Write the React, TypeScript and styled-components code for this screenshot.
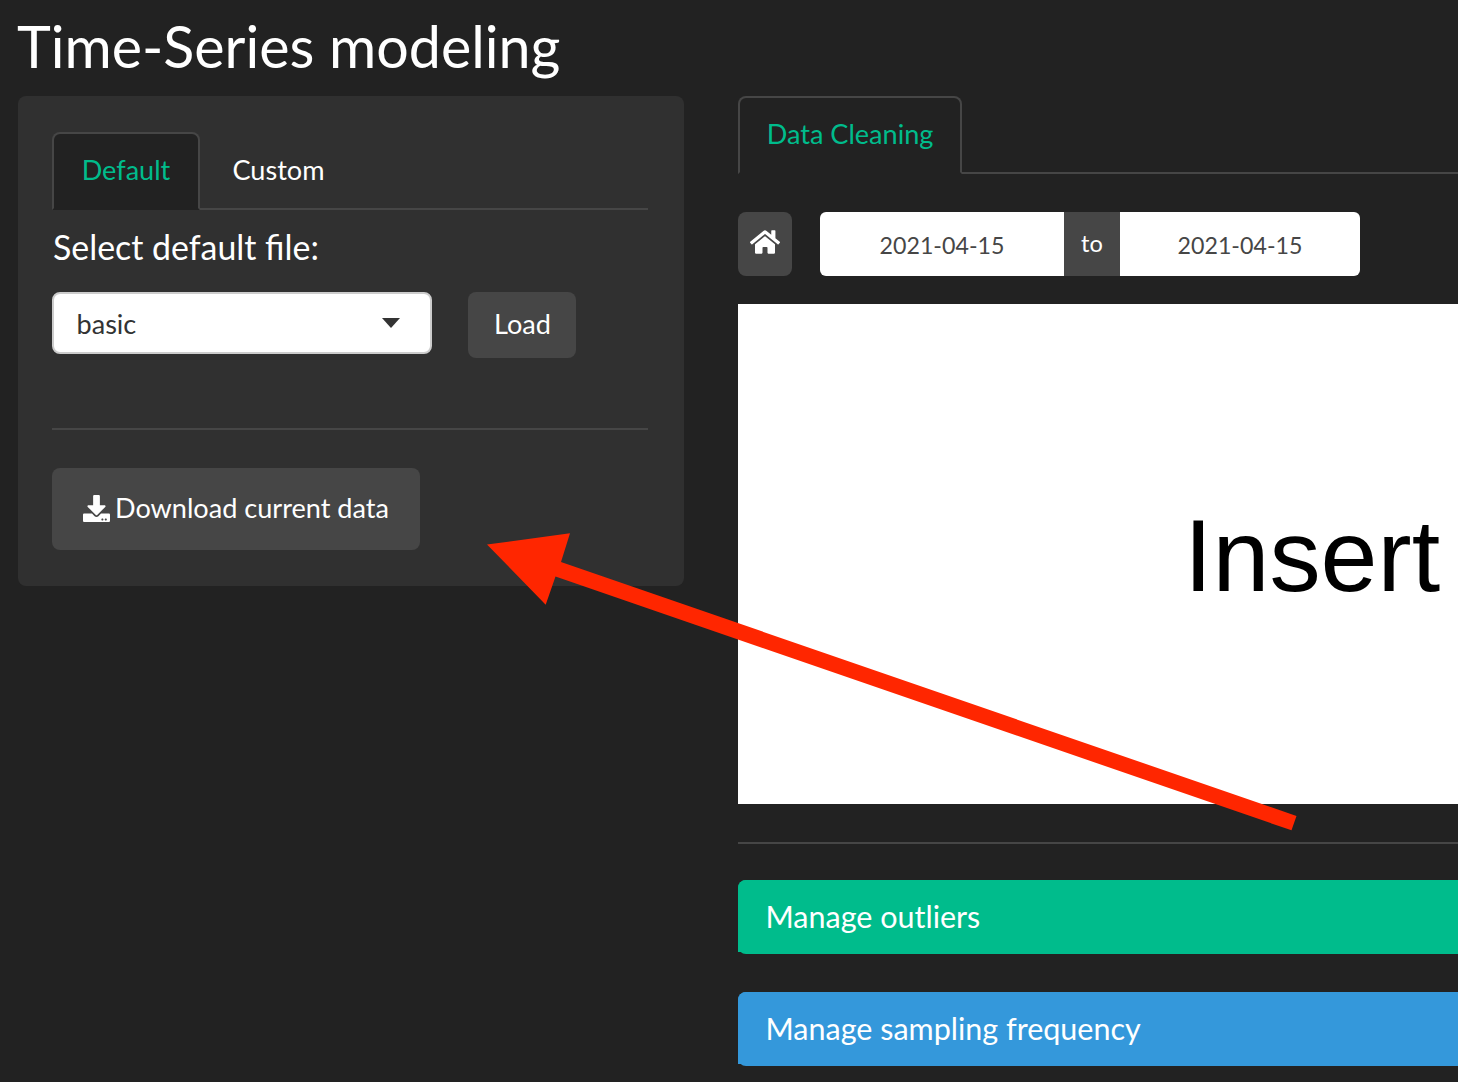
import React from "react";
import styled, { createGlobalStyle } from "styled-components";
import { FaDownload, FaHome } from "react-icons/fa";

const GlobalStyle = createGlobalStyle`
  *, *::before, *::after { box-sizing: border-box; }
  body {
    margin: 0;
    background: #222;
    color: #fff;
    font-family: Lato, "Liberation Sans", sans-serif;
    font-size: 27.1px;
    overflow: hidden;
  }
  button { font: inherit; color: inherit; border: 0; }
`;

const Page = styled.div`
  position: relative;
  height: 1082px;
  padding: 12px 0 0 18px;
  overflow: hidden;
`;

const Title = styled.h1`
  margin: 0 0 16px -1px;
  height: 68px;
  font-size: 57.4px;
  font-weight: 400;
  line-height: 68px;
  white-space: nowrap;
`;

const Columns = styled.div`
  display: flex;
  align-items: flex-start;
  gap: 54px;
`;

const Sidebar = styled.aside`
  flex: none;
  width: 666px;
  height: 490px;
  padding: 36px 36px 0 34px;
  border-radius: 8px;
  background: #303030;
`;

const Main = styled.main`
  flex: 1;
  min-width: 0;
`;

const Tabs = styled.nav`
  display: flex;
  height: 78px;
  border-bottom: 2px solid #464646;
`;

const Tab = styled.button<{ $active?: boolean; $width: number }>`
  width: ${(p) => p.$width}px;
  height: 78px;
  padding: 0 0 2px;
  border: 2px solid ${(p) => (p.$active ? "#464646" : "transparent")};
  border-bottom-color: transparent;
  border-radius: 8px 8px 0 0;
  background: ${(p) => (p.$active ? "#222" : "transparent")};
  color: ${(p) => (p.$active ? "#00bc8c" : "#fff")};
  line-height: 70px;
  white-space: nowrap;
`;

const FieldLabel = styled.label`
  display: block;
  margin-top: 15px;
  padding-left: 1px;
  height: 44px;
  font-size: 33.9px;
  line-height: 44px;
`;

const FileRow = styled.div`
  display: flex;
  align-items: flex-start;
  gap: 36px;
  margin-top: 23px;
`;

const Select = styled.div`
  display: flex;
  align-items: center;
  justify-content: space-between;
  width: 380px;
  height: 62px;
  padding: 0 30px 0 22.5px;
  border: 2px solid #ccc;
  border-radius: 8px;
  background: #fff;
  color: #333;
`;

const Caret = styled.span`
  margin-top: -1px;
  border: 9px solid transparent;
  border-top: 10px solid #333;
  border-bottom: 0;
`;

const Button = styled.button`
  display: flex;
  align-items: center;
  justify-content: center;
  padding: 0 0 4px;
  border-radius: 8px;
  background: #464646;
  white-space: nowrap;
`;

const LoadButton = styled(Button)`
  width: 108px;
  height: 66px;
  padding-left: 1px;
`;

const DownloadButton = styled(Button)`
  gap: 5px;
  width: 368px;
  height: 82px;

  svg {
    margin-top: 3px;
  }
`;

const HomeButton = styled(Button)`
  width: 54px;
  height: 64px;
  padding-right: 1px;
`;

const Rule = styled.hr<{ $top: number; $bottom: number }>`
  height: 2px;
  margin: ${(p) => p.$top}px 0 ${(p) => p.$bottom}px;
  border: 0;
  background: #464646;
`;

const Toolbar = styled.div`
  display: flex;
  gap: 28px;
  margin: 38px 0 28px;
`;

const DateRange = styled.div`
  display: flex;
  height: 64px;
  border-radius: 6px;
  overflow: hidden;
  text-align: center;
`;

const DateField = styled.div<{ $width: number }>`
  width: ${(p) => p.$width}px;
  background: #fff;
  color: #464646;
  font-size: 23.2px;
  line-height: 66px;
`;

const DateSeparator = styled.div`
  width: 56px;
  background: #464646;
  font-size: 23.6px;
  line-height: 62px;
`;

const Plot = styled.section`
  height: 500px;
  padding: 194px 0 0 446px;
  background: #fff;
  color: #000;
  font-family: "Liberation Sans", Arial, sans-serif;
  font-size: 102.4px;
  line-height: 116px;
  white-space: nowrap;
`;

const Panel = styled.section<{ $color: string }>`
  height: 74px;
  margin: 0 -20px 38px 0;
  border-radius: 8px;
  background: ${(p) => p.$color};
`;

const PanelHeading = styled.h3<{ $color: string }>`
  height: 72px;
  margin: 0;
  padding-left: 27.5px;
  border-radius: 8px 8px 0 0;
  background: ${(p) => p.$color};
  font-size: 30.5px;
  font-weight: 400;
  line-height: 72px;
`;

const Arrow = styled.svg`
  position: absolute;
  left: 487px;
  top: 533px;
  pointer-events: none;
`;

const panels = [
  { title: "Manage outliers", color: "#00bc8c" },
  { title: "Manage sampling frequency", color: "#3498db" },
];

export default function App() {
  return (
    <Page>
      <GlobalStyle />
      <Title>Time-Series modeling</Title>
      <Columns>
        <Sidebar>
          <Tabs>
            <Tab $active $width={148}>Default</Tab>
            <Tab $width={157}>Custom</Tab>
          </Tabs>
          <FieldLabel>Select default file:</FieldLabel>
          <FileRow>
            <Select>
              basic
              <Caret />
            </Select>
            <LoadButton>Load</LoadButton>
          </FileRow>
          <Rule $top={70} $bottom={38} />
          <DownloadButton>
            <FaDownload size={27} />
            Download current data
          </DownloadButton>
        </Sidebar>
        <Main>
          <Tabs>
            <Tab $active $width={224}>Data Cleaning</Tab>
          </Tabs>
          <Toolbar>
            <HomeButton aria-label="Home">
              <FaHome size={30} />
            </HomeButton>
            <DateRange>
              <DateField $width={244}>2021-04-15</DateField>
              <DateSeparator>to</DateSeparator>
              <DateField $width={240}>2021-04-15</DateField>
            </DateRange>
          </Toolbar>
          <Plot>Insert</Plot>
          <Rule $top={38} $bottom={36} />
          {panels.map((panel) => (
            <Panel key={panel.title} $color={panel.color}>
              <PanelHeading $color={panel.color}>{panel.title}</PanelHeading>
            </Panel>
          ))}
        </Main>
      </Columns>
      <Arrow width="810" height="298" viewBox="487 533 810 298">
        <path d="M487 544.5 570 533.3 561 562 1296.5 816 1291.5 830.3 555.5 576.5 545.7 604.7Z" fill="#ff2600" />
      </Arrow>
    </Page>
  );
}
